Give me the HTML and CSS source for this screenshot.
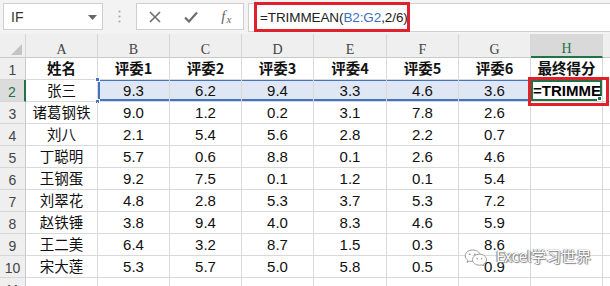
FILE: index.html
```html
<!DOCTYPE html>
<html>
<head>
<meta charset="utf-8">
<link rel="stylesheet" href="styles.css">
</head>
<body>
<div class="app">
  <div class="toolbar">
    <div class="namebox"><span class="nb-text">IF</span><svg class="nb-arrow" width="9" height="5" viewBox="0 0 9 5"><path d="M0 0H9L4.5 5Z" fill="#666"/></svg></div>
    <div class="sep"><svg width="3" height="13" viewBox="0 0 3 13"><circle cx="1.5" cy="1.5" r="1.1" fill="#aaa"/><circle cx="1.5" cy="6.5" r="1.1" fill="#aaa"/><circle cx="1.5" cy="11.5" r="1.1" fill="#aaa"/></svg></div>
    <div class="btns">
      <svg width="12" height="12" viewBox="0 0 12 12"><path d="M1 1L11 11M11 1L1 11" stroke="#6e6e6e" stroke-width="1.6"/></svg>
      <svg width="14" height="12" viewBox="0 0 14 12"><path d="M1 6.5L5 10.5L13 1.5" stroke="#6e6e6e" stroke-width="2.2" fill="none"/></svg>
      <span class="fx"><i>f</i><span class="fx-x">x</span></span>
    </div>
    <div class="fbar"><span class="ftext">=TRIMMEAN(<span class="ref">B2:G2</span>,2/6)</span></div>
  </div>
  <div class="sheet">
    <div class="hd corner"><svg class="corner-tri" width="11" height="11" viewBox="0 0 11 11"><path d="M11 0V11H0Z" fill="#c4c4c4"/></svg></div>
    <div class="hd col">A</div><div class="hd col">B</div><div class="hd col">C</div><div class="hd col">D</div><div class="hd col">E</div><div class="hd col">F</div><div class="hd col">G</div><div class="hd col col-act">H</div><div class="hd col"></div>

    <div class="rh">1</div><div class="c b">姓名</div><div class="c b">评委1</div><div class="c b">评委2</div><div class="c b">评委3</div><div class="c b">评委4</div><div class="c b">评委5</div><div class="c b">评委6</div><div class="c b">最终得分</div><div class="c"></div>

    <div class="rh rh-act">2</div><div class="c n">张三</div><div class="c sel sel-l">9.3<span class="hdl hdl-t"></span><span class="hdl hdl-b"></span></div><div class="c sel">6.2</div><div class="c sel">9.4</div><div class="c sel">3.3</div><div class="c sel">4.6</div><div class="c sel sel-r">3.6</div><div class="c act">=TRIMME<span class="act-hdl"></span></div><div class="c"></div>

    <div class="rh">3</div><div class="c n">诸葛钢铁</div><div class="c">9.0</div><div class="c">1.2</div><div class="c">0.2</div><div class="c">3.1</div><div class="c">7.8</div><div class="c">2.6</div><div class="c"></div><div class="c"></div>
    <div class="rh">4</div><div class="c n">刘八</div><div class="c">2.1</div><div class="c">5.4</div><div class="c">5.6</div><div class="c">2.8</div><div class="c">2.2</div><div class="c">0.7</div><div class="c"></div><div class="c"></div>
    <div class="rh">5</div><div class="c n">丁聪明</div><div class="c">5.7</div><div class="c">0.6</div><div class="c">8.8</div><div class="c">0.1</div><div class="c">2.6</div><div class="c">4.6</div><div class="c"></div><div class="c"></div>
    <div class="rh">6</div><div class="c n">王钢蛋</div><div class="c">9.2</div><div class="c">7.5</div><div class="c">0.1</div><div class="c">1.2</div><div class="c">0.1</div><div class="c">5.4</div><div class="c"></div><div class="c"></div>
    <div class="rh">7</div><div class="c n">刘翠花</div><div class="c">4.8</div><div class="c">2.8</div><div class="c">5.3</div><div class="c">3.7</div><div class="c">5.3</div><div class="c">7.2</div><div class="c"></div><div class="c"></div>
    <div class="rh">8</div><div class="c n">赵铁锤</div><div class="c">3.8</div><div class="c">9.4</div><div class="c">4.0</div><div class="c">8.3</div><div class="c">4.6</div><div class="c">5.9</div><div class="c"></div><div class="c"></div>
    <div class="rh">9</div><div class="c n">王二美</div><div class="c">6.4</div><div class="c">3.2</div><div class="c">8.7</div><div class="c">1.5</div><div class="c">0.3</div><div class="c">8.6</div><div class="c"></div><div class="c"></div>
    <div class="rh">10</div><div class="c n">宋大莲</div><div class="c">5.3</div><div class="c">5.7</div><div class="c">5.0</div><div class="c">5.8</div><div class="c">0.5</div><div class="c">0.9</div><div class="c"></div><div class="c"></div>
    <div class="rh">11</div><div class="c"></div><div class="c"></div><div class="c"></div><div class="c"></div><div class="c"></div><div class="c"></div><div class="c"></div><div class="c"></div><div class="c"></div>
  </div>
  <div class="mark mark-formula"></div>
  <div class="mark mark-cell"></div>
  <div class="watermark">
    <svg class="wm-icon" width="24" height="17" viewBox="0 0 24 17"><path d="M8.5 1C4.4 1 1.2 3.6 1.2 6.8c0 1.8 1 3.3 2.6 4.4L3.2 13.4l2.6-1.3c0.9 0.3 1.8 0.4 2.7 0.4" fill="#fff" stroke="#9a9a9a" stroke-width="1"/><path d="M15.5 5.2c-4 0-7.1 2.5-7.1 5.5s3.1 5.5 7.1 5.5c0.8 0 1.6-0.1 2.3-0.3l2.2 1.1-0.5-1.9c1.9-1 3.1-2.6 3.1-4.4 0-3-3.1-5.5-7.1-5.5z" fill="#fff" stroke="#9a9a9a" stroke-width="1"/><path d="M8.5 1c4 0 7.2 2.3 7.3 4.2" fill="none" stroke="#9a9a9a" stroke-width="1"/><circle cx="5.8" cy="5.3" r="0.9" fill="#9a9a9a"/><circle cx="10.8" cy="5.3" r="0.9" fill="#9a9a9a"/><circle cx="13.3" cy="9.8" r="0.8" fill="#9a9a9a"/><circle cx="17.7" cy="9.8" r="0.8" fill="#9a9a9a"/></svg>
    <span class="wm-text">Excel学习世界</span>
  </div>
</div>
</body>
</html>
```
FILE: styles.css
```css
* { box-sizing: border-box; }
html, body { margin: 0; padding: 0; background: #fff; }
body { width: 610px; height: 286px; overflow: hidden; }
.app { position: relative; width: 610px; height: 286px; overflow: hidden; font-family: "Liberation Sans", Arial, sans-serif; }

.toolbar { height: 34px; background: #f3f3f3; display: flex; align-items: flex-start; padding-top: 3px; }
.namebox { margin-left: 3px; width: 100px; height: 27px; background: #fff; border: 1px solid #cfcfcf; display: flex; align-items: center; justify-content: space-between; padding: 0 5px 0 7px; }
.nb-text { font-size: 14px; color: #333; }
.nb-arrow { margin-top: 1px; }
.sep { width: 33px; height: 27px; display: flex; align-items: center; justify-content: center; }
.btns { width: 108px; height: 27px; background: #fff; border: 1px solid #cfcfcf; display: flex; align-items: center; justify-content: space-around; }
.fx { font-family: "Liberation Serif", serif; color: #666; font-size: 15px; display: flex; align-items: baseline; }
.fx-x { font-style: italic; font-size: 11px; margin-left: 1px; position: relative; top: 2px; }
.fbar { margin-left: 4px; flex: 1; height: 29px; background: #fff; border: 1px solid #cfcfcf; border-right: none; display: flex; align-items: center; padding-left: 11px; }
.ftext { font-size: 13.5px; color: #222; letter-spacing: -0.1px; }
.ref { color: #3c6ec2; }

.sheet { display: grid; grid-template-columns: 26px 72px 72px 72px 72px 73px 72px 72px 72px 72px; grid-template-rows: 24px repeat(11, 22px); }
.hd { background: #efefef; border-right: 1px solid #d6d6d6; border-bottom: 1px solid #c9c9c9; font-family: "Liberation Serif", serif; font-size: 14px; color: #444; display: flex; align-items: center; justify-content: center; padding-top: 8px; }
.corner { position: relative; justify-content: flex-end; align-items: flex-end; padding: 0 3px 2px 0; }
.col-act { background: #d9d9d9; color: #217346; border-bottom: 2px solid #217346; }
.rh { background: #efefef; border-right: 1px solid #c9c9c9; border-bottom: 1px solid #d6d6d6; font-family: "Liberation Sans", sans-serif; font-size: 14px; color: #444; display: flex; align-items: center; justify-content: center; padding-top: 2px; }
.rh-act { background: #dcdcdc; color: #217346; border-right: 2px solid #217346; }

.c { position: relative; border-right: 1px solid #d9d9d9; border-bottom: 1px solid #d9d9d9; font-size: 15px; color: #111; display: flex; align-items: center; justify-content: center; white-space: nowrap; overflow: visible; }
.b { font-family: "Noto Sans CJK SC", sans-serif; font-weight: 700; font-size: 14.5px; line-height: 1; }
.n { font-family: "Noto Sans CJK SC", sans-serif; font-size: 14.5px; line-height: 1; }
.sel { background: #dfe7f4; box-shadow: inset 0 1px 0 #4472c4, inset 0 -2px 0 #4472c4; }
.sel-l { box-shadow: inset 0 1px 0 #4472c4, inset 0 -2px 0 #4472c4, inset 2px 0 0 #4472c4; }
.sel-r { box-shadow: inset 0 1px 0 #4472c4, inset 0 -2px 0 #4472c4, inset -2px 0 0 #4472c4; }
.hdl { position: absolute; left: -3px; width: 5px; height: 5px; background: #4472c4; border: 1px solid #fff; }
.hdl-t { top: -3px; }
.hdl-b { bottom: -3px; }
.act { justify-content: flex-start; padding-left: 2px; overflow: hidden; font-weight: 700; font-size: 15px; color: #000; box-shadow: inset 0 0 0 2px #217346; }
.act-hdl { position: absolute; right: 0; bottom: 0; width: 5px; height: 5px; background: #217346; border: 1px solid #fff; }

.mark { position: absolute; border: 3px solid #e0202a; }
.mark-formula { left: 254px; top: 2px; width: 156px; height: 30px; }
.mark-cell { left: 528px; top: 77px; width: 81px; height: 29px; }

.watermark { position: absolute; left: 464px; top: 245px; display: flex; align-items: center; gap: 8px; }
.wm-icon { margin-top: 4px; }
.wm-text { font-family: "Noto Sans CJK SC", sans-serif; font-size: 15px; color: #fff; text-shadow: 0 0 1px #555, 1px 1px 1px #888, -1px 0 1px #888; line-height: 1; }
```
